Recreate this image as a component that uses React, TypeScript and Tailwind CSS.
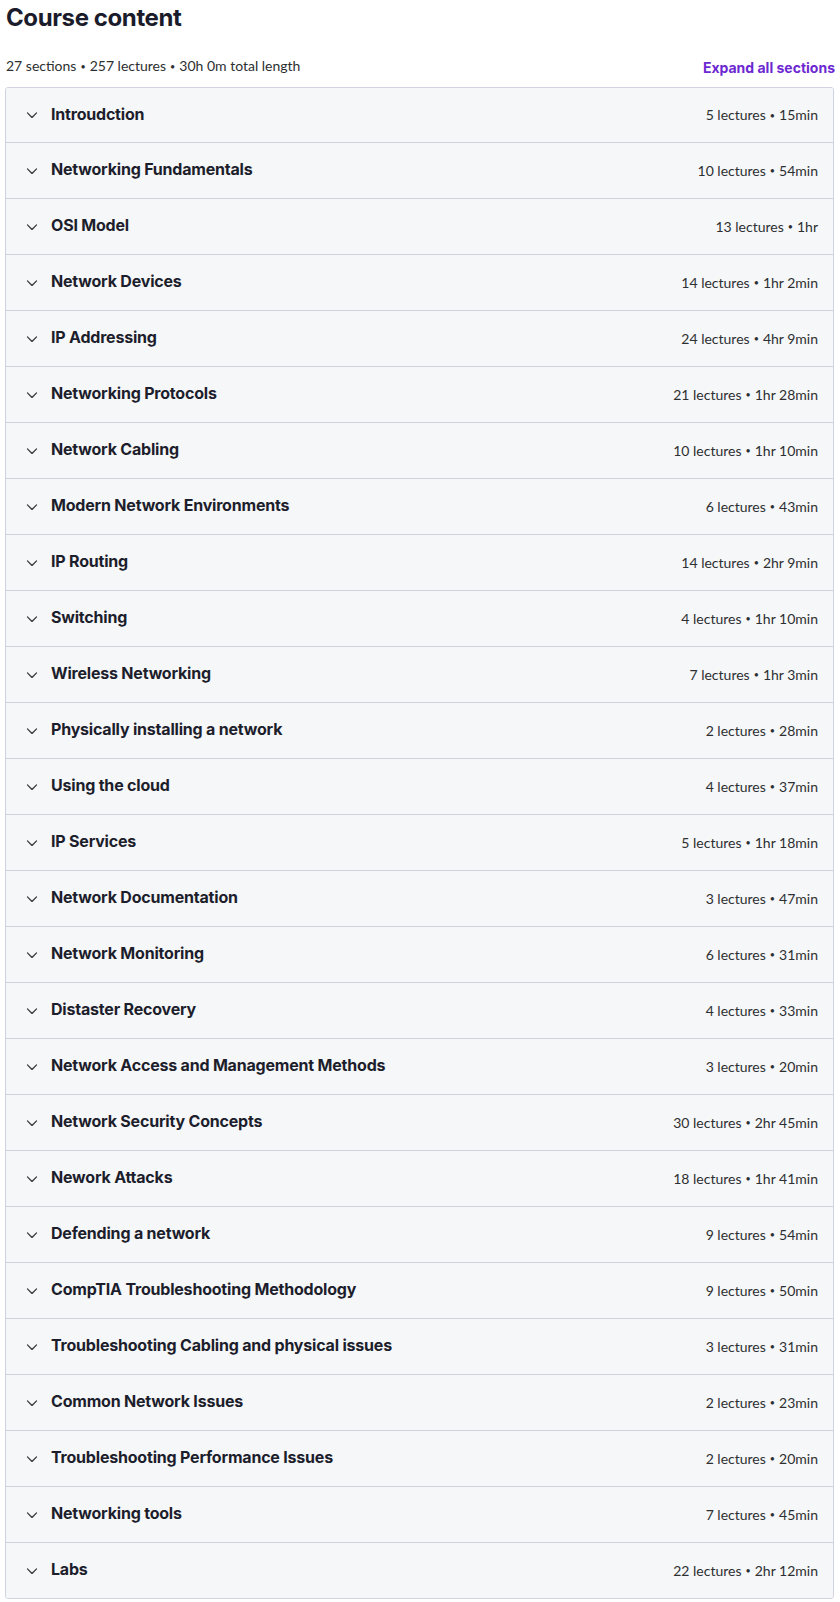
const sections = [
  { title: "Introudction", meta: ["5 lectures", "15min"] },
  { title: "Networking Fundamentals", meta: ["10 lectures", "54min"] },
  { title: "OSI Model", meta: ["13 lectures", "1hr"] },
  { title: "Network Devices", meta: ["14 lectures", "1hr 2min"] },
  { title: "IP Addressing", meta: ["24 lectures", "4hr 9min"] },
  { title: "Networking Protocols", meta: ["21 lectures", "1hr 28min"] },
  { title: "Network Cabling", meta: ["10 lectures", "1hr 10min"] },
  { title: "Modern Network Environments", meta: ["6 lectures", "43min"] },
  { title: "IP Routing", meta: ["14 lectures", "2hr 9min"] },
  { title: "Switching", meta: ["4 lectures", "1hr 10min"] },
  { title: "Wireless Networking", meta: ["7 lectures", "1hr 3min"] },
  { title: "Physically installing a network", meta: ["2 lectures", "28min"] },
  { title: "Using the cloud", meta: ["4 lectures", "37min"] },
  { title: "IP Services", meta: ["5 lectures", "1hr 18min"] },
  { title: "Network Documentation", meta: ["3 lectures", "47min"] },
  { title: "Network Monitoring", meta: ["6 lectures", "31min"] },
  { title: "Distaster Recovery", meta: ["4 lectures", "33min"] },
  { title: "Network Access and Management Methods", meta: ["3 lectures", "20min"] },
  { title: "Network Security Concepts", meta: ["30 lectures", "2hr 45min"] },
  { title: "Nework Attacks", meta: ["18 lectures", "1hr 41min"] },
  { title: "Defending a network", meta: ["9 lectures", "54min"] },
  { title: "CompTIA Troubleshooting Methodology", meta: ["9 lectures", "50min"] },
  { title: "Troubleshooting Cabling and physical issues", meta: ["3 lectures", "31min"] },
  { title: "Common Network Issues", meta: ["2 lectures", "23min"] },
  { title: "Troubleshooting Performance Issues", meta: ["2 lectures", "20min"] },
  { title: "Networking tools", meta: ["7 lectures", "45min"] },
  { title: "Labs", meta: ["22 lectures", "2hr 12min"] },
];

const Chevron = () => (
  <svg width="20" height="20" viewBox="0 0 24 24" fill="none" stroke="#2d2f31" strokeWidth="1.4" strokeLinecap="round" strokeLinejoin="round">
    <path d="M6.5 9.5l5.5 5.5 5.5-5.5" />
  </svg>
);

// small dot between the parts of a line of stats
const Dot = () => <span className="relative -top-[1px] mx-[4px] inline-block align-middle text-[9px] leading-none">•</span>;

const Stats = ({ parts }: { parts: string[] }) => (
  <span className="text-[14px] leading-[20px] text-[#2d2f31]" style={{ fontFamily: "Lato, sans-serif" }}>
    {parts.map((p, i) => (
      <span key={p}>
        {i > 0 && <Dot />}
        {p}
      </span>
    ))}
  </span>
);

const App = () => {
  return (
    <div className="min-h-screen bg-white px-[5px] text-[#2d2f31]" style={{ fontFamily: "Inter, 'Noto Sans', sans-serif" }}>
      <h2 className="pt-[3px] pl-[1px] text-[24px] font-bold leading-[30px] tracking-[-0.4px] text-[#1b1c2b]">
        Course content
      </h2>

      <div className="mt-[23px] mb-[11px] flex items-end justify-between pl-[1px]">
        <Stats parts={["27 sections", "257 lectures", "30h 0m total length"]} />
        <button className="translate-y-[2px] text-[14px] font-bold leading-[20px] text-[#6d28d2]">Expand all sections</button>
      </div>

      {/* section list */}
      <div className="mr-[1px] overflow-hidden rounded-[3px] border border-[#d1d2e0]">
        {sections.map((s, i) => (
          <div
            key={s.title}
            className={`flex items-center bg-[#f6f7f9] pl-[16px] pr-[15px] ${i > 0 ? "h-[56px] border-t border-[#d1d2e0]" : "h-[54px]"}`}
          >
            <span className="mr-[9px] flex w-[20px] items-center justify-center">
              <Chevron />
            </span>
            <span className="flex-1 pb-[3px] text-[16px] font-bold leading-[22px] tracking-[-0.2px] text-[#1d1e2c]">{s.title}</span>
            <Stats parts={s.meta} />
          </div>
        ))}
      </div>
    </div>
  );
};

export default App;
